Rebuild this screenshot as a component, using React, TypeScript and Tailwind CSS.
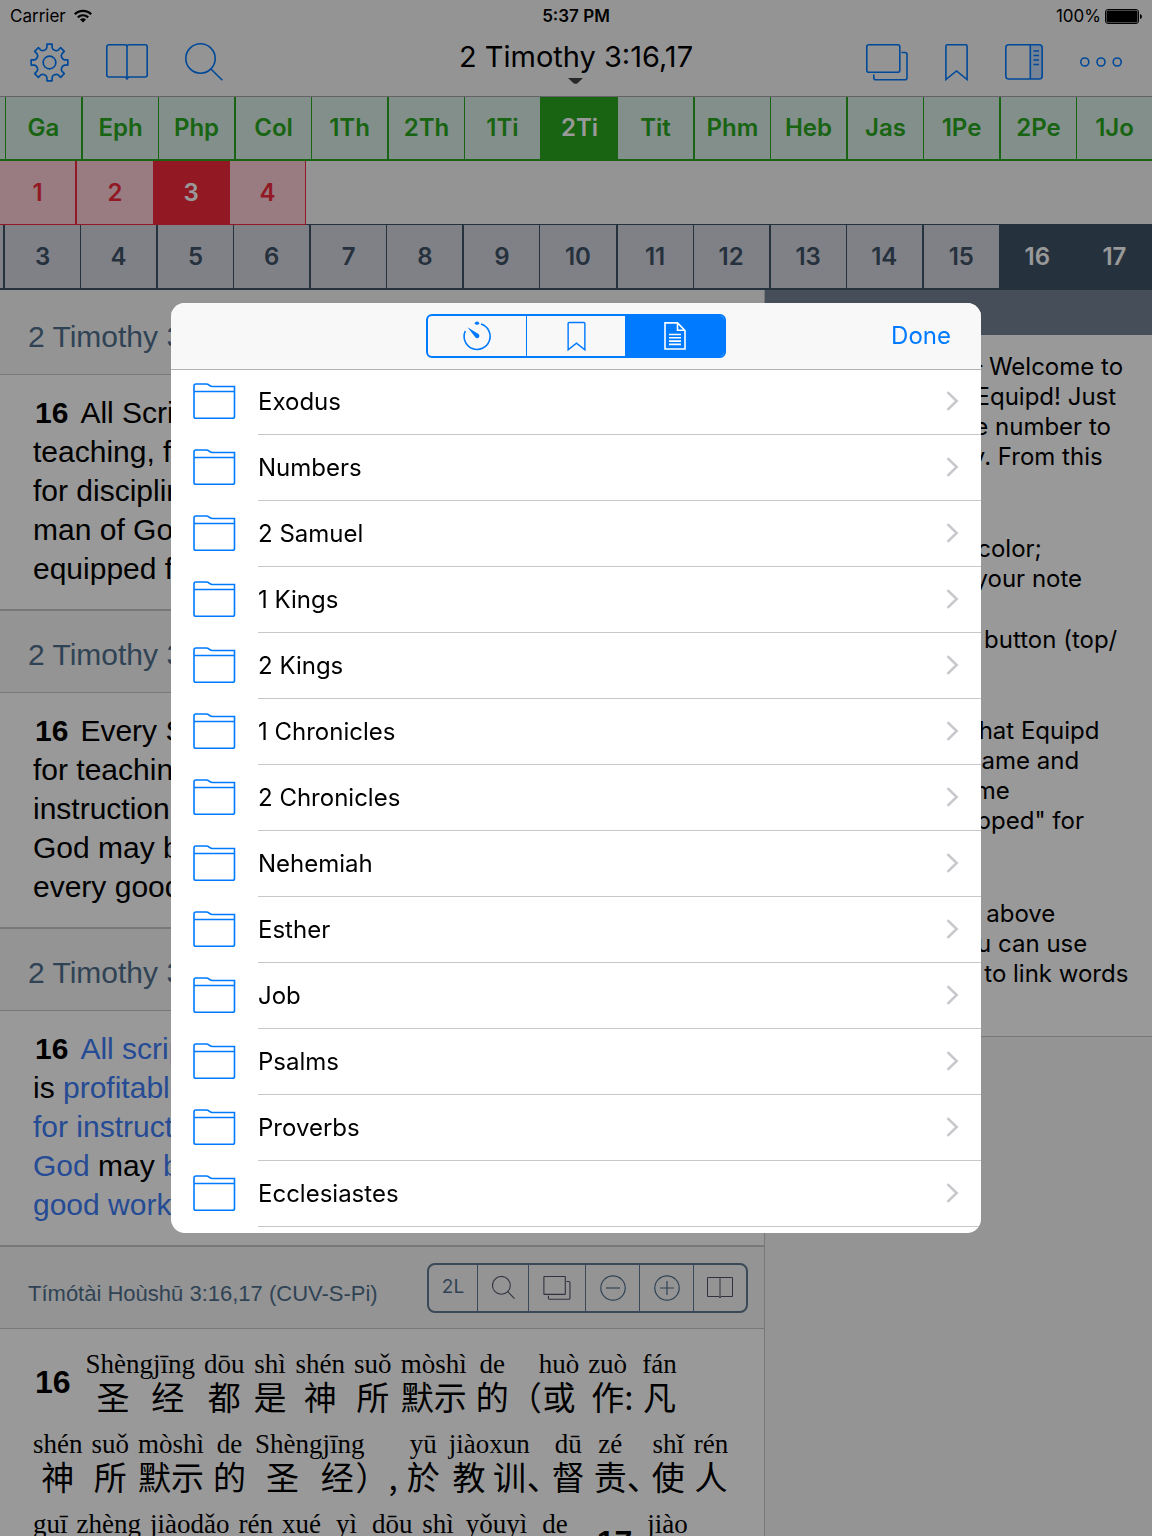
import { useState } from 'react';
import type { ReactNode } from 'react';

const BOOKS = ['Ga', 'Eph', 'Php', 'Col', '1Th', '2Th', '1Ti', '2Ti', 'Tit', 'Phm', 'Heb', 'Jas', '1Pe', '2Pe', '1Jo'];
const CHAPTERS = ['1', '2', '3', '4'];
const VERSES = ['3', '4', '5', '6', '7', '8', '9', '10', '11', '12', '13', '14', '15', '16', '17'];

const FOLDERS = [
  'Exodus', 'Numbers', '2 Samuel', '1 Kings', '2 Kings', '1 Chronicles', '2 Chronicles',
  'Nehemiah', 'Esther', 'Job', 'Psalms', 'Proverbs', 'Ecclesiastes',
];

const NOTE_GROUPS = [
  { gap: 'mb-[62px]', lines: ['2 Timothy 3:16 — Welcome to', 'Bible Notes with Equipd! Just', 'tap on each verse number to', 'add notes quickly. From this'] },
  { gap: 'mb-[31px]', lines: ['• Change a note color;', '• Move or share your note'] },
  { gap: 'mb-[61px]', lines: ['Tap on the editor button (top/'] },
  { gap: 'mb-[63px]', lines: ['You may realize that Equipd', 'was an unusual name and', 'it comes from some', 'verse: "fully equipped" for'] },
  { gap: '', lines: ['Look in the verse above', 'to review how you can use', 'your notes editor to link words'] },
];

type Word = { py?: string; hz?: string; mark?: string; num?: string; cls?: string };

const RUBY_LINES: Word[][] = [
  [
    { num: '16' }, { py: 'Shèngjīng', hz: '圣经' }, { py: 'dōu', hz: '都' }, { py: 'shì', hz: '是' }, { py: 'shén', hz: '神' },
    { py: 'suǒ', hz: '所' }, { py: 'mòshì', hz: '默示' }, { py: 'de', hz: '的' }, { mark: '（', cls: '-ml-[9px] -mr-3' }, { py: 'huò', hz: '或' },
    { py: 'zuò', hz: '作' }, { mark: ':', cls: '-ml-3' }, { py: 'fán', hz: '凡' },
  ],
  [
    { py: 'shén', hz: '神' }, { py: 'suǒ', hz: '所' }, { py: 'mòshì', hz: '默示' }, { py: 'de', hz: '的' }, { py: 'Shèngjīng', hz: '圣经' },
    { mark: '）', cls: '-ml-[18px] -mr-[9px]' }, { mark: ',' }, { py: 'yū', hz: '於' }, { py: 'jiàoxun', hz: '教训' },
    { mark: '、', cls: '-ml-3 -mr-[17px]' }, { py: 'dū', hz: '督' }, { py: 'zé', hz: '责' },
    { mark: '、', cls: '-ml-[9px] -mr-[17px]' }, { py: 'shǐ', hz: '使' }, { py: 'rén', hz: '人' },
  ],
  [
    { py: 'guī', hz: '归' }, { py: 'zhèng', hz: '正' }, { py: 'jiàodǎo', hz: '教导' }, { py: 'rén', hz: '人' }, { py: 'xué', hz: '学' },
    { py: 'yì', hz: '义' }, { py: 'dōu', hz: '都' }, { py: 'shì', hz: '是' }, { py: 'yǒuyì', hz: '有益' }, { py: 'de', hz: '的' },
    { mark: ',', cls: '-ml-1' }, { num: '17' }, { py: 'jiào', hz: '叫' },
  ],
];

// eight-toothed gear outline around (20, 20)
const GEAR = Array.from({ length: 8 }, (_, i) => {
  const at = (r: number, deg: number) => {
    const a = ((i * 45 + deg) * Math.PI) / 180;
    return `${(20 + r * Math.cos(a)).toFixed(2)} ${(20 + r * Math.sin(a)).toFixed(2)}`;
  };
  return `${i ? 'L' : 'M'}${at(15.5, -10)} L${at(19, -8)} L${at(19, 8)} L${at(15.5, 10)} Q${at(13.8, 13)} ${at(13.6, 22.5)} Q${at(13.8, 32)} ${at(15.5, 35)}`;
}).join(' ') + ' Z';

function GearIcon() {
  return (
    <svg width="39" height="39" viewBox="0 0 40 40" fill="none" stroke="currentColor" strokeWidth="1.7" strokeLinejoin="round">
      <path d={GEAR} />
      <circle cx="20" cy="20" r="6.5" />
    </svg>
  );
}

function BookIcon({ small = false }: { small?: boolean }) {
  return small ? (
    <svg width="26" height="22" viewBox="0 0 26 22" fill="none" stroke="#50566a" strokeWidth="1">
      <path d="M.5.5h25v19H14l-1 1.5-1-1.5H.5zM13 .5v20" />
    </svg>
  ) : (
    <svg width="42" height="38" viewBox="0 0 42 38" fill="none" stroke="currentColor" strokeWidth="1.6">
      <path d="M3 1.7h15.5q2.5 0 2.5 1.6 0-1.6 2.5-1.6H39q2.2 0 2.2 2.2V32q0 2-2.2 2H22.5L21 36l-1.5-2H3Q.8 34 .8 32V3.9Q.8 1.7 3 1.7z" />
      <path d="M21 3v32" />
    </svg>
  );
}

function SearchIcon({ small = false }: { small?: boolean }) {
  return (
    <svg width={small ? 23 : 38} height={small ? 23 : 38} viewBox="0 0 38 38" fill="none" stroke={small ? '#50566a' : 'currentColor'} strokeWidth={small ? 1.8 : 1.6}>
      <circle cx="15.5" cy="15.5" r="14.7" />
      <path d="M26 26l11.3 11.3" />
    </svg>
  );
}

function StackIcon({ small = false }: { small?: boolean }) {
  return (
    <svg width={small ? 28 : 42} height={small ? 24 : 37} viewBox="0 0 42 37" fill="none" stroke={small ? '#50566a' : 'currentColor'} strokeWidth={small ? 1.7 : 1.6}>
      <rect x=".8" y=".8" width="33" height="27.5" rx={small ? 1 : 2} />
      <path d="M35.5 8.5H39q2 0 2 2v23.3q0 2-2 2H9.8q-2 0-2-2v-3.3" />
    </svg>
  );
}

function BookmarkIcon({ small = false }: { small?: boolean }) {
  return (
    <svg width={small ? 19 : 23} height={small ? 30 : 38} viewBox="0 -1 23 38" fill="none" stroke="currentColor" strokeWidth={small ? 1.8 : 1.6}>
      <path d="M.9 35.5V2.2Q.9.8 2.2.8h18.6q1.3 0 1.3 1.4v33.3L11.5 27z" />
    </svg>
  );
}

function SidebarIcon() {
  return (
    <svg width="38" height="36" viewBox="0 0 38 36" fill="none" stroke="currentColor" strokeWidth="1.6">
      <path d="M25.5 1H35q2 0 2 2v30q0 2-2 2h-9.5z" fill="currentColor" fillOpacity=".2" stroke="none" />
      <rect x=".8" y=".8" width="36.4" height="34.2" rx="3" />
      <path d="M25.3 1v34M28.5 7H34M28.5 11.5H34M28.5 16H34M28.5 20.5H34" />
    </svg>
  );
}

function DotsIcon() {
  return (
    <svg width="42" height="10" viewBox="0 0 42 10" fill="none" stroke="currentColor" strokeWidth="1.6">
      <circle cx="4.8" cy="5" r="4" />
      <circle cx="21" cy="5" r="4" />
      <circle cx="37.2" cy="5" r="4" />
    </svg>
  );
}

function ZoomIcon({ plus = false }: { plus?: boolean }) {
  return (
    <svg width="26" height="26" viewBox="0 0 26 26" fill="none" stroke="currentColor" strokeWidth="1.2">
      <circle cx="13" cy="13" r="12.2" />
      <path d={plus ? 'M6 13h14M13 6v14' : 'M6 13h14'} />
    </svg>
  );
}

function TimerIcon() {
  return (
    <svg width="28" height="30" viewBox="0 0 28 30" fill="none" stroke="currentColor" strokeWidth="1.6">
      <path d="M18 3a13 13 0 1 1-15.7 7" />
      <path d="M4.5 6.2l10.600 6.600a2.300 2.300 0 1 1-3 3.200z" fill="currentColor" stroke="none" />
      <ellipse cx="14" cy="2.2" rx="2.2" ry="1.6" fill="currentColor" stroke="none" />
    </svg>
  );
}

function DocIcon() {
  return (
    <svg width="22" height="28" viewBox="0 0 22 28" fill="none" stroke="currentColor" strokeWidth="1.6">
      <path d="M1 .9h12.500L21 8.500V27H1zM13.500 1v7.300H21" />
      <path d="M5 12.500h12M5 15.800h12M5 19.100h12M5 22.400h12" />
    </svg>
  );
}

function FolderIcon() {
  return (
    <svg width="43" height="38" viewBox="0 0 43 38" fill="none" stroke="#007aff" strokeWidth="1.6">
      <path d="M1 33.500V3q0-2 2-2h10q2 0 3.500 1.300T20 3.500h21.500v30q0 1.800-1.800 1.800H3q-2 0-2-1.800zM1 8.500h40.500" />
    </svg>
  );
}

function StatusBar() {
  return (
    <div className="grid grid-cols-3 items-center px-2.5 h-8 text-[17px] leading-5">
      <div className="flex items-center gap-2">
        Carrier
        <svg width="18" height="14" viewBox="0 0 18 14" fill="none" stroke="#000" strokeWidth="2.2">
          <path d="M.8 5.300a11.500 11.500 0 0 1 16.400 0M3.800 8.400a7.400 7.400 0 0 1 10.400 0" />
          <path d="M9 13.500L6 10.600a4.200 4.200 0 0 1 6 0z" fill="#000" stroke="none" />
        </svg>
      </div>
      <div className="text-center font-semibold">5:37 PM</div>
      <div className="flex items-center justify-end gap-1">
        100%
        <svg width="37" height="15" viewBox="0 0 37 15">
          <rect x=".5" y=".5" width="33" height="14" rx="2.5" fill="none" stroke="#000" strokeWidth="1" />
          <rect x="1.5" y="1.5" width="31" height="12" rx="1.5" />
          <path d="M35 5q2 .5 2 2.500T35 10z" />
        </svg>
      </div>
    </div>
  );
}

function IconButton({ label, children }: { label: string; children: ReactNode }) {
  return (
    <button type="button" aria-label={label} className="flex items-center justify-center text-[#007aff]">
      {children}
    </button>
  );
}

function Section({ title, children }: { title: string; children: ReactNode }) {
  return (
    <section className="border-b-2 border-[#c8c8cc]">
      <h2 className="h-[82px] flex items-center px-7 pt-1.5 border-b border-[#c8c8cc] text-[30px] text-[#50708e]">{title}</h2>
      <div className="bg-white pl-[33px] pt-[18px] pb-[21px] text-[30px] leading-[39px]">{children}</div>
    </section>
  );
}

const Line = ({ children }: { children: ReactNode }) => <span className="block whitespace-nowrap">{children}</span>;
const Num = ({ children }: { children: ReactNode }) => <b className="ml-0.5 mr-3">{children}</b>;

function RubyWord({ py, hz, mark, num, cls = '' }: Word) {
  if (num) return <b className="mt-3.5 px-0.5 mr-1 font-['Liberation_Sans'] text-[32px] leading-9">{num}</b>;
  if (mark) return <span className={`mt-7 text-[33px] leading-9 ${cls}`}>{mark}</span>;
  return (
    <span className="flex flex-col">
      <span className="text-center font-['Liberation_Serif'] text-[27px] leading-7">{py}</span>
      <span className="flex justify-around text-[33px] leading-9">
        {[...(hz ?? '')].map((c, i) => <span key={i}>{c}</span>)}
      </span>
    </span>
  );
}

export default function App() {
  const [tab, setTab] = useState(2);
  const tabs = [
    { label: 'Recent', icon: <TimerIcon /> },
    { label: 'Bookmarks', icon: <BookmarkIcon small /> },
    { label: 'Notes', icon: <DocIcon /> },
  ];
  const tools = [
    { label: 'Two lines', width: 'w-[49px]', icon: <span className="text-[19px]">2L</span> },
    { label: 'Search', width: 'w-[51px]', icon: <SearchIcon small /> },
    { label: 'Versions', width: 'w-[57px]', icon: <StackIcon small /> },
    { label: 'Smaller', width: 'w-[54px]', icon: <ZoomIcon /> },
    { label: 'Larger', width: 'w-[54px]', icon: <ZoomIcon plus /> },
    { label: 'Book', width: 'w-[52px]', icon: <BookIcon small /> },
  ];

  return (
    <div className="h-screen overflow-hidden flex flex-col bg-[#f7f7f7] text-black font-['Inter',sans-serif]">
      <header className="h-[97px] shrink-0 border-b border-[#a7a7aa]">
        <StatusBar />
        <div className="grid grid-cols-[1fr_auto_1fr] items-center h-[60px] px-[30px]">
          <div className="flex items-center gap-[37px]">
            <IconButton label="Settings"><GearIcon /></IconButton>
            <IconButton label="Library"><BookIcon /></IconButton>
            <IconButton label="Search"><SearchIcon /></IconButton>
          </div>
          <button type="button" className="flex flex-col items-center text-[29px] leading-[34px]">
            2 Timothy 3:16,17
            <svg className="mt-1" width="15" height="6" viewBox="0 0 15 6" fill="#444"><path d="M0 0h15L9.500 5.200q-2 1.200-4 0z" /></svg>
          </button>
          <div className="flex items-center justify-end gap-[37px]">
            <IconButton label="Windows"><StackIcon /></IconButton>
            <IconButton label="Bookmark"><BookmarkIcon /></IconButton>
            <IconButton label="Sidebar"><SidebarIcon /></IconButton>
            <IconButton label="More"><DotsIcon /></IconButton>
          </div>
        </div>
      </header>

      {/* Book, chapter and verse pickers */}
      <nav className="shrink-0 text-2xl font-semibold">
        <div className="flex h-16 pl-[5px] bg-[#daeee6] border-b-2 border-[#28a721] text-[#28a721]">
          {BOOKS.map((b, i) => (
            <button key={b} type="button" className={`flex-1 border-[#28a721] ${i % 2 ? 'border-l-2' : 'border-l'} ${b === '2Ti' ? 'bg-[#28a721] text-white' : ''}`}>{b}</button>
          ))}
        </div>
        <div className="h-16 border-b border-[#3f5267]">
          <div className="flex w-[306px] h-16 border-b border-[#f32b3c] bg-[#ffcfd7] text-[#f32b3c]">
            {CHAPTERS.map((c, i) => (
              <button key={c} type="button" className={`flex-1 border-[#f32b3c] ${i === 0 ? 'border-r-2' : 'border-r'} ${c === '3' ? 'bg-[#f32b3c] text-white' : ''}`}>{c}</button>
            ))}
          </div>
        </div>
        <div className="flex h-[65px] pl-[3px] bg-[#d5d7e1] border-b-2 border-[#3f5267] text-[#3f5267]">
          {VERSES.map((v, i) => (
            <button key={v} type="button" className={`flex-1 border-[#3f5267] ${i % 2 ? 'border-l' : 'border-l-2'} ${i > 12 ? 'bg-[#3f5267] text-white' : ''}`}>{v}</button>
          ))}
        </div>
      </nav>

      <div className="flex flex-1 min-h-0">
        <main className="w-[765px] shrink-0 pt-[3px] border-r border-[#c8c8cc] overflow-hidden font-['Liberation_Sans',sans-serif]">
          <Section title="2 Timothy 3:16,17">
            <Line><Num>16</Num>All Scripture is inspired of God and beneficial for</Line>
            <Line>teaching, for reproving, for setting things straight,</Line>
            <Line>for disciplining in righteousness, so that the</Line>
            <Line>man of God may be fully competent, completely</Line>
            <Line>equipped for every good work.</Line>
          </Section>
          <Section title="2 Timothy 3:16,17">
            <Line><Num>16</Num>Every Scripture inspired of God is also profitable</Line>
            <Line>for teaching, for reproof, for correction, for</Line>
            <Line>instruction which is in righteousness: that the man of</Line>
            <Line>God may be complete, furnished completely unto</Line>
            <Line>every good work.</Line>
          </Section>
          <Section title="2 Timothy 3:16,17">
            <Line><Num>16</Num><span className="text-[#3e7df7]">All scripture</span></Line>
            <Line>is <span className="text-[#3e7df7]">profitable for doctrine, for reproof,</span></Line>
            <Line><span className="text-[#3e7df7]">for instruction in righteousness</span></Line>
            <Line><span className="text-[#3e7df7]">God</span> may <span className="text-[#3e7df7]">be perfect, throughly furnished</span></Line>
            <Line><span className="text-[#3e7df7]">good works.</span></Line>
          </Section>
          <section>
            <div className="h-[82px] flex items-center justify-between pl-7 pr-4 border-b border-[#c8c8cc] text-[#50708e]">
              <h2 className="pt-3 text-[22px]">Tímótài Hoùshū 3:16,17 (CUV-S-Pi)</h2>
              <div className="flex h-[50px] border-2 border-[#607b93] rounded-lg divide-x divide-[#607b93] font-['Inter']">
                {tools.map(t => (
                  <button key={t.label} type="button" aria-label={t.label} className={`flex items-center justify-center ${t.width}`}>{t.icon}</button>
                ))}
              </div>
            </div>
            <div className="bg-white pl-[33px] pt-[21px] font-['Noto_Sans_CJK_SC',sans-serif]">
              {RUBY_LINES.map((words, i) => (
                <div key={i} className="flex items-start gap-[9px] h-20 whitespace-nowrap">
                  {words.map((w, j) => <RubyWord key={j} {...w} />)}
                </div>
              ))}
            </div>
          </section>
        </main>

        <aside className="flex-1 min-w-0">
          <div className="h-[45px] bg-[#768494]" />
          <div className="h-[702px] bg-white border-b border-[#c8c8cc] pl-5 pt-[17px] text-2xl">
            {NOTE_GROUPS.map((g, i) => (
              <div key={i} className={`leading-[30px] ${g.gap}`}>
                {g.lines.map(l => <Line key={l}>{l}</Line>)}
              </div>
            ))}
          </div>
        </aside>
      </div>

      {/* Notes dialog */}
      <div className="fixed inset-0 bg-black/40 flex items-center justify-center">
        <div role="dialog" aria-label="Notes" className="w-full max-w-[810px] h-[930px] max-h-full bg-white rounded-[14px] overflow-hidden">
          <div className="relative grid grid-cols-[1fr_auto_1fr] items-center h-[66px] px-[30px] bg-[#f8f8f8] shadow-[0_1px_0_#b2b2b2]">
            <div className="col-start-2 flex w-[300px] h-11 border-2 border-[#007aff] rounded-md divide-x divide-[#007aff] overflow-hidden">
              {tabs.map((t, i) => (
                <button
                  key={t.label}
                  type="button"
                  aria-label={t.label}
                  onClick={() => setTab(i)}
                  className={`flex-1 flex items-center justify-center ${tab === i ? 'bg-[#007aff] text-white' : 'text-[#007aff]'}`}
                >
                  {t.icon}
                </button>
              ))}
            </div>
            <button type="button" className="justify-self-end text-2xl text-[#007aff]">Done</button>
          </div>
          <ul>
            {FOLDERS.map(f => (
              <li key={f}>
                <button type="button" className="flex items-center w-full h-[66px] pl-[22px] text-left text-2xl">
                  <FolderIcon />
                  <span className="flex-1 flex items-center justify-between h-full ml-[22px] pr-[22px] border-b border-[#c8c7cc]">
                    {f}
                    <svg width="13" height="21" viewBox="0 0 13 21" fill="none" stroke="#c7c7cc" strokeWidth="2.5"><path d="M1.500 1.200l9.200 8.800-9.200 8.800" /></svg>
                  </span>
                </button>
              </li>
            ))}
          </ul>
        </div>
      </div>
    </div>
  );
}
